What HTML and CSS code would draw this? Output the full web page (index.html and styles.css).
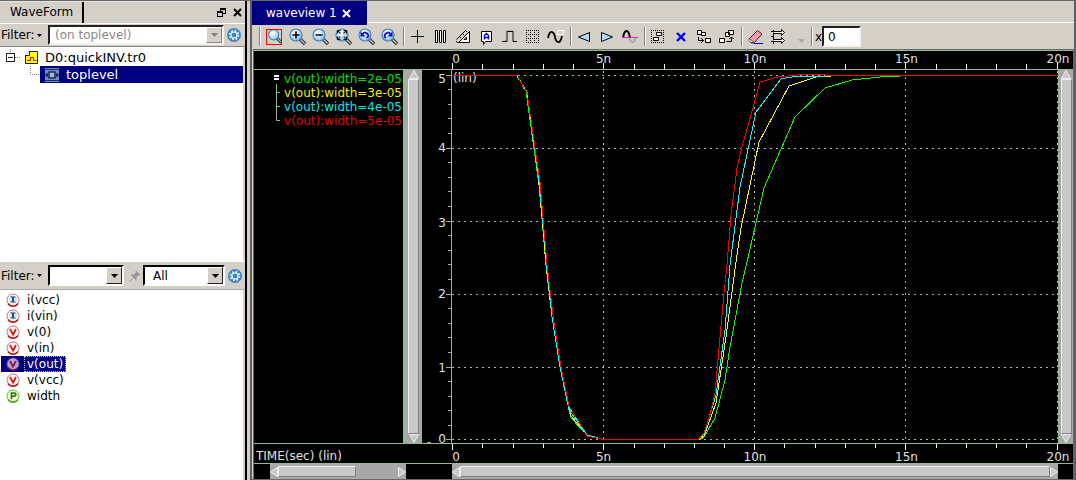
FILE: index.html
```html
<!DOCTYPE html>
<html lang="en">
<head>
<meta charset="utf-8">
<title>WaveView</title>
<link rel="stylesheet" href="styles.css">
</head>
<body>
<svg class="defs" aria-hidden="true">
  <defs>
    <radialGradient id="glass" cx="0.4" cy="0.35" r="0.7"><stop offset="0" stop-color="#ffffff"/><stop offset="0.5" stop-color="#c4e2fa"/><stop offset="1" stop-color="#7db8ea"/></radialGradient>
    <symbol id="lens" viewBox="0 0 20 20">
      <path d="M13 12l5 5" stroke="#222" stroke-width="3.4"/><path d="M13 12l4.6 4.6" stroke="#c8ccd2" stroke-width="1.4"/>
      <circle cx="9" cy="8" r="6" fill="url(#glass)" stroke="#4a82b8" stroke-width="1.2"/>
    </symbol>
    <symbol id="gear" viewBox="0 0 16 16">
      <circle cx="8" cy="8" r="7" fill="#3c85c6"/><circle cx="8" cy="8" r="4" fill="none" stroke="#d8e8f4" stroke-width="2.6" stroke-dasharray="1.57 1.57"/><circle cx="8" cy="8" r="3" fill="none" stroke="#d8e8f4" stroke-width="1.4"/><circle cx="8" cy="8" r="2.2" fill="#3c85c6"/>
    </symbol>
    <symbol id="current" viewBox="0 0 14 14"><circle cx="7" cy="7" r="6" fill="#fff" stroke="#d87070" stroke-width="1"/><path d="M2 10.500a6 6 0 0 0 10 0" fill="none" stroke="#c01818" stroke-width="1.500"/><circle cx="7" cy="6.500" r="4.200" fill="#d4e3ee"/><path d="M4.500 4h5M4.500 9h5" stroke="#1c5088" stroke-width="1.200"/><path d="M7 4v5" stroke="#1c5088" stroke-width="2"/></symbol>
    <symbol id="voltage" viewBox="0 0 14 14"><circle cx="7" cy="7" r="6" fill="#fff" stroke="#d87070" stroke-width="1"/><path d="M2 10.500a6 6 0 0 0 10 0" fill="none" stroke="#c01818" stroke-width="1.500"/><path d="M4 4l3 5.500 3-5.500" fill="none" stroke="#e81010" stroke-width="1.800"/></symbol>
    <symbol id="voltage-on" viewBox="0 0 14 14"><circle cx="7" cy="7" r="6" fill="#aaa8d8" stroke="#8050a0" stroke-width="1"/><path d="M2 10.500a6 6 0 0 0 10 0" fill="none" stroke="#701050" stroke-width="1.500"/><path d="M4 4l3 5.500 3-5.500" fill="none" stroke="#a01050" stroke-width="1.800"/></symbol>
    <symbol id="param" viewBox="0 0 14 14"><circle cx="7" cy="7" r="6" fill="#e8fcd8" stroke="#6cc02c" stroke-width="1"/><path d="M2 10.500a6 6 0 0 0 10 0" fill="none" stroke="#58ac18" stroke-width="1.500"/><path d="M5.500 10v-6h2.500q1.800 0 1.800 1.600t-1.800 1.600h-2.500" fill="none" stroke="#287010" stroke-width="1.600"/></symbol>
  </defs>
</svg>
<div class="app">
  <aside class="browser">
    <header class="dock-head">
      <h1 class="dock-title">WaveForm</h1>
      <div class="dock-tools">
        <button class="plain" aria-label="Float panel"><svg width="9" height="9"><path d="M3 0h6v6h-3v3h-6v-6h3z"/><path class="face" d="M4 2h4v3h-2v-2h-2zM1 5h4v3h-4z"/></svg></button>
        <button class="plain" aria-label="Close panel"><svg width="9" height="9" class="cross"><path d="M1 1l7 7M8 1l-7 7"/></svg></button>
      </div>
    </header>
    <div class="filter filter-top">
      <label for="f1">Filter:</label><button class="plain menu" aria-label="Filter options"><svg width="5" height="3"><path d="M0 0h5l-2.500 3z"/></svg></button>
      <div class="combo combo-wide off"><input id="f1" type="text" placeholder="(on toplevel)"><button class="drop" aria-label="Show filters"><svg width="7" height="4"><path d="M0 0h7l-3.500 4z"/></svg></button></div>
      <button class="plain gear" aria-label="Tree settings"><svg width="16" height="16"><use href="#gear"/></svg></button>
    </div>
    <ul class="tree">
      <li class="node">
        <svg class="branch" width="16" height="17" aria-hidden="true"><path class="dots" d="M5.500 0v4M10 8.500h6"/><rect x="1.500" y="4.500" width="8" height="8"/><path d="M3 8.500h5"/></svg>
        <svg width="15" height="15" aria-hidden="true"><path d="M5 1.500h8.500v12h-12v-8z" fill="#ffff10" stroke="#202000"/><path d="M5.500 1v4.500h-4.500" fill="#fff" stroke="#202000"/><path d="M3 10.500h3.500v-3h3v3h3" fill="none" stroke="#e00"/></svg>
        <span>D0:quickINV.tr0</span>
      </li>
      <li class="node child">
        <svg class="branch" width="10" height="17" aria-hidden="true"><path class="dots" d="M.5 0v8.500h9"/></svg>
        <span class="picked"><svg width="16" height="16" aria-hidden="true"><path fill="#7490bd" d="M1 1h14v14h-14z"/><path d="M1 2.500h14M1 13.500h14" stroke="#152c61" /><path d="M5 5h6v6h-6zM3 6v4M13 6v4M1 8h3M12 8h3" fill="#a9b5cf" stroke="#10285c" stroke-width="1.500"/></svg>toplevel</span>
      </li>
    </ul>
    <div class="filter filter-low">
      <label for="f2">Filter:</label><button class="plain menu" aria-label="Filter options"><svg width="5" height="3"><path d="M0 0h5l-2.500 3z"/></svg></button>
      <div class="combo combo-small"><input id="f2" type="text"><button class="drop" aria-label="Show filters"><svg width="7" height="4"><path d="M0 0h7l-3.500 4z"/></svg></button></div>
      <button class="plain pin" aria-label="Pin filter"><svg width="12" height="12"><path d="M7 1l4 4-2 0-2 2v3l-5-5h3l2-2zM4 8l-3 3" fill="#999" stroke="#999"/></svg></button>
      <div class="combo combo-kind"><select aria-label="Signal type"><option>All</option></select><span class="drop" aria-hidden="true"><svg width="7" height="4"><path d="M0 0h7l-3.500 4z"/></svg></span></div>
      <button class="plain gear" aria-label="Signal settings"><svg width="16" height="16"><use href="#gear"/></svg></button>
    </div>
    <ul class="signals" role="listbox" aria-label="Signals">
      <li role="option"><svg width="14" height="14"><use href="#current"/></svg><span>i(vcc)</span></li>
      <li role="option"><svg width="14" height="14"><use href="#current"/></svg><span>i(vin)</span></li>
      <li role="option"><svg width="14" height="14"><use href="#voltage"/></svg><span>v(0)</span></li>
      <li role="option"><svg width="14" height="14"><use href="#voltage"/></svg><span>v(in)</span></li>
      <li role="option" class="on" aria-selected="true"><svg width="14" height="14"><use href="#voltage-on"/></svg><span>v(out)</span></li>
      <li role="option"><svg width="14" height="14"><use href="#voltage"/></svg><span>v(vcc)</span></li>
      <li role="option"><svg width="14" height="14"><use href="#param"/></svg><span>width</span></li>
    </ul>
  </aside>

  <main class="viewer">
    <nav class="tabs">
      <div class="tab">waveview 1<button class="plain" aria-label="Close tab"><svg width="9" height="9" class="cross light"><path d="M1 1l7 7M8 1l-7 7"/></svg></button></div>
    </nav>
    <div class="toolbar" role="toolbar">
      <span class="sep"></span>
      <button class="tool" aria-label="Zoom area"><svg viewBox="0 0 20 20"><use href="#lens" x="2" y="1" width="17" height="17"/><rect x="2.500" y="2.500" width="15" height="15" fill="none" stroke="#f00"/></svg></button>
      <button class="tool" aria-label="Zoom in"><svg viewBox="0 0 20 20"><use href="#lens"/><path d="M5.500 8h7M9 4.500v7" stroke="#000" stroke-width="1.600"/></svg></button>
      <button class="tool" aria-label="Zoom out"><svg viewBox="0 0 20 20"><use href="#lens"/><path d="M5.500 8h7" stroke="#111" stroke-width="1.600"/></svg></button>
      <button class="tool" aria-label="Zoom fit"><svg viewBox="0 0 20 20"><use href="#lens"/><path d="M5 4l8 8M13 4l-8 8" stroke="#333" stroke-dasharray="3.500 4.400" stroke-width="1.200"/><path d="M4.500 6.500v-3h3M10.500 3.500h3v3M13.500 9.500v3h-3M7.500 12.500h-3v-3" fill="none" stroke="#111" stroke-width="1.200"/></svg></button>
      <button class="tool" aria-label="Undo zoom"><svg viewBox="0 0 20 20"><use href="#lens"/><path d="M6 8q2-4 5-1.500t-.5 4.500" fill="none" stroke="#11c" stroke-width="1.800"/><path d="M4.500 4.500v5h5z" fill="#11c"/></svg></button>
      <button class="tool" aria-label="Redo zoom"><svg viewBox="0 0 20 20"><use href="#lens"/><path d="M12 8q-2-4-5-1.500t0 4.500" fill="none" stroke="#11c" stroke-width="1.800"/><path d="M13.500 4.500v5h-5z" fill="#11c"/></svg></button>
      <span class="sep"></span>
      <button class="tool" aria-label="Cursor"><svg viewBox="0 0 20 20" class="ink"><path d="M3 9.500h13M9.500 3v13"/></svg></button>
      <button class="tool" aria-label="Vertical cursors"><svg viewBox="0 0 20 20" class="ink"><path d="M4.500 3.500h2v12h-2zM8.500 3.500h2v12h-2zM12.500 3.500h2v12h-2z" fill="#fff"/></svg></button>
      <button class="tool" aria-label="Measure"><svg viewBox="0 0 20 20" class="ink"><path d="M15.500 4.500v11h-11zM12.500 10v2.500h-2.500z" fill="#fff"/><path d="M2.500 12.500l9-9M2 14l2 2M5 9l2 2M8 6l2 2M11 3l2 2" /></svg></button>
      <button class="tool" aria-label="Label"><svg viewBox="0 0 20 20" class="ink"><path d="M4.500 4.500h10v10h-6l-2 3v-3h-2z" fill="#fff"/><path d="M7.500 12.500v-4l2-2 2 2v4M8 10.500h3" stroke="#00f" stroke-width="1.500"/></svg></button>
      <button class="tool" aria-label="Pulse"><svg viewBox="0 0 20 20" class="ink"><path d="M2 14.500h5v-10h6v10h4"/><path d="M4 13.500h2v-10h8v10" stroke="#8ab" stroke-width=".6"/></svg></button>
      <button class="tool" aria-label="Grid"><svg viewBox="0 0 20 20" class="ink"><path stroke-dasharray="1 1" d="M3 3.500h14M3 7.500h14M3 11.500h14M3 15.500h14"/><path stroke-dasharray="1 1" d="M3.500 3v14M7.500 3v14M11.500 3v14M15.500 3v14"/></svg></button>
      <button class="tool" aria-label="Signal"><svg viewBox="0 0 20 20" class="ink"><path d="M2 11q1.500-7 4-6t3 5 3 5 4-6" stroke-width="1.800"/><path d="M11.500 3.500h6v4h-6z" fill="#d4d0c8" stroke="#fff"/></svg></button>
      <span class="sep tight"></span>
      <button class="tool" aria-label="Previous edge"><svg viewBox="0 0 20 20" class="ink"><path d="M15.500 5.500v9l-11-4.500z" fill="#b8dafa"/></svg></button>
      <button class="tool" aria-label="Next edge"><svg viewBox="0 0 20 20" class="ink"><path d="M4.500 5.500v9l11-4.500z" fill="#b8dafa"/></svg></button>
      <button class="tool" aria-label="Threshold"><svg viewBox="0 0 20 20" class="ink"><path d="M9.500 11q1.500 5 3.500 4t3-5" stroke="#aaa" stroke-width="2"/><path d="M3 11q1-7 3.500-7t3.500 7" stroke-width="2"/><path d="M2 10.500h16" stroke="#e020d0"/></svg></button>
      <span class="sep tight"></span>
      <button class="tool" aria-label="Group"><svg viewBox="0 0 20 20" class="ink"><path stroke-dasharray="1 1" d="M3 3.500h13M3 15.500h13M3.500 3v13M15.500 3v13"/><path d="M8.500 5.500h5v3h-5zM5.500 10.500h5v3h-5z" fill="#fff"/></svg></button>
      <button class="tool" aria-label="Delete"><svg viewBox="0 0 20 20"><path d="M6 6l8 8M14 6l-8 8" stroke="#00f" stroke-width="2.400"/></svg></button>
      <button class="tool" aria-label="Push down"><svg viewBox="0 0 20 20" class="ink"><path d="M3.500 3.500h4v4h-4zM7.500 5.500h4v3h-4zM11.500 11.500h5v4h-5z" fill="#fff"/><path d="M4.500 10v3.500h5M7 11l2.500 2.500-2.500 2.500" /></svg></button>
      <button class="tool" aria-label="Pop up"><svg viewBox="0 0 20 20" class="ink"><path d="M11.500 3.500h5v4h-5zM8.500 5.500h4v4h-4zM2.500 11.500h5v4h-5z" fill="#fff"/><path d="M9.500 14.500h5v-4M12.500 12l2-2 2 2"/></svg></button>
      <span class="sep"></span>
      <button class="tool" aria-label="Erase"><svg viewBox="0 0 20 20"><path d="M3.500 11.500l8-8 4.500 3.500-8 9h-3z" fill="#f09aaa" stroke="#601828"/><path d="M3.500 11.500l4.500 4h-3l-2-2z" fill="#fff" stroke="#555"/><path d="M8 16.500h9" stroke="#00f"/></svg></button>
      <button class="tool" aria-label="Bus"><svg viewBox="0 0 20 20" class="ink"><path d="M4.500 3v14M2 4.500h3M2 9.500h3M2 14.500h3"/><path d="M4.500 4.500h8v-2l3 3-3 3v-2h-8M4.500 12.500h8v-2l3 3-3 3v-2h-8" fill="#fff"/></svg></button>
      <button class="plain more" aria-label="More tools"><svg width="7" height="5"><path d="M0 0h7l-3.500 4z" fill="#aaa8a4"/></svg></button>
      <span class="sep"></span>
      <label class="xval">x<input type="text" value="0"></label>
    </div>

    <div class="wave">
      <div class="axis axis-top">
        <svg viewBox="0 0 606 6" preserveAspectRatio="none"><path d="M.5 0v6M30.500 1v5M61.500 1v5M91.500 1v5M121.500 1v5M151.500 0v6M182.500 1v5M212.500 1v5M242.500 1v5M272.500 1v5M302.500 0v6M332.500 1v5M363.500 1v5M393.500 1v5M423.500 1v5M453.500 0v6M484.500 1v5M514.500 1v5M544.500 1v5M574.500 1v5M605.500 0v6"/></svg>
        <span class="zero">0</span><span class="q1">5n</span><span class="q2">10n</span><span class="q3">15n</span><span class="q4">20n</span>
      </div>
      <div class="legend">
        <svg width="12" height="50" aria-hidden="true"><path d="M0 4h5v2h-5zM0 7h5v2h-5z" fill="#fff"/><path d="M2.500 13v36.500h3.500M2 21.500h4M2 35.500h4" fill="none" stroke="#8fbc8f"/></svg>
        <ul>
          <li class="c-green">v(out):width=2e-05</li>
          <li class="c-yellow">v(out):width=3e-05</li>
          <li class="c-cyan">v(out):width=4e-05</li>
          <li class="c-red">v(out):width=5e-05</li>
        </ul>
      </div>
      <div class="vbar vbar-left"><svg width="10" height="9"><path class="arrow" d="M5 .5l4.500 8h-9z"/></svg><i class="thumb"></i><svg width="10" height="9"><path class="arrow" d="M5 8.500l4.500-8h-9z"/></svg></div>
      <div class="yaxis">
        <svg viewBox="0 0 30 373" preserveAspectRatio="none"><path d="M29.500 0v373M24 5.500h6M24 78.500h6M24 151.500h6M24 224.500h6M24 297.500h6M24 369.500h6M26 19.500h4M26 34.500h4M26 48.500h4M26 63.500h4M26 92.500h4M26 107.500h4M26 121.500h4M26 136.500h4M26 165.500h4M26 180.500h4M26 194.500h4M26 209.500h4M26 238.500h4M26 253.500h4M26 267.500h4M26 282.500h4M26 311.500h4M26 326.500h4M26 340.500h4M26 355.500h4M5 372.500h4"/></svg>
        <span class="v5">5</span><span class="v4">4</span><span class="v3">3</span><span class="v2">2</span><span class="v1">1</span><span class="v0">0</span>
      </div>
      <div class="plot">
        <span class="scale">(lin)</span>
        <svg viewBox="452 70 606 373" preserveAspectRatio="none" role="img" aria-label="Output voltage against time for four widths">
          <path class="grid" d="M452 75.500h606M452 148.500h606M452 221.500h606M452 294.500h606M452 367.500h606M452 439.500h606M603.500 71v372M754.500 71v372M905.500 71v372M1057.500 71v372"/>
          <g class="trace">
            <polyline class="t-green" points="517,75.500 526,91 539,185 546,265 552,317 560,367 571,418 587,435 603,439.500 700,439.500 704,437 715,418 725,380 730,347 742,283 747,262 764,188 795,117 825,88 852,80 880,77 900,76"/>
            <polyline class="t-yellow" points="517,75.500 527,92 539,183 546,265 552,317 560,367 571,416 587,435 603,439.500 699,439.500 704,436 716,403 726,337 736,262 741,228 759,142 789,86 816,77 831,76"/>
            <polyline class="t-cyan" points="517,75.500 527,92 539,182 547,265 552,317 560,367 569,410 587,435 603,439.500 698,439.500 704,434 716,395 725,330 730,265 740,187 756,112 781,79 797,76 825,76"/>
            <polyline class="t-red" points="452,75.500 517,75.500 527,93 540,182 547,265 553,315 561,367 569,406 587,436 603,439.500 698,439.500 704,433 710,415 715,393 724,293 727,265 731,215 737,168 742,147 751,115 760,82 778,77 803,74.500 825,74.500 825,75.500 1058,75.500"/>
            <polyline class="mix mix-green" points="517,76 527,94 539,185 546,265"/>
            <polyline class="mix mix-yellow" points="517,76 527,94 539,185 546,265"/>
            <polyline class="mix mix-cyan" points="546,265 552,317 560,367 568,406 587,435 600,438"/>
          </g>
        </svg>
      </div>
      <div class="vbar vbar-right"><svg width="10" height="9"><path class="arrow" d="M5 .5l4.500 8h-9z"/></svg><i class="thumb"></i><svg width="10" height="9"><path class="arrow" d="M5 8.500l4.500-8h-9z"/></svg></div>
      <div class="xname">TIME(sec) (lin)</div>
      <div class="axis axis-low">
        <svg viewBox="0 0 606 6" preserveAspectRatio="none"><path d="M.5 0v6M30.500 0v4M61.500 0v4M91.500 0v4M121.500 0v4M151.500 0v6M182.500 0v4M212.500 0v4M242.500 0v4M272.500 0v4M302.500 0v6M332.500 0v4M363.500 0v4M393.500 0v4M423.500 0v4M453.500 0v6M484.500 0v4M514.500 0v4M544.500 0v4M574.500 0v4M605.500 0v6"/></svg>
        <span class="zero">0</span><span class="q1">5n</span><span class="q2">10n</span><span class="q3">15n</span><span class="q4">20n</span>
      </div>
      <div class="hbar hbar-left"><svg width="8" height="10"><path class="arrow" d="M.5 5l7-4.500v9z"/></svg><i class="thumb"></i><i class="space"></i><svg width="8" height="10"><path class="arrow" d="M7.500 5l-7-4.500v9z"/></svg></div>
      <div class="hbar hbar-right"><svg width="8" height="10"><path class="arrow" d="M.5 5l7-4.500v9z"/></svg><i class="thumb"></i><svg width="8" height="10"><path class="arrow" d="M7.500 5l-7-4.500v9z"/></svg></div>
    </div>
  </main>
</div>
</body>
</html>
```
FILE: styles.css
```css
* { box-sizing: border-box; }
html, body { height: 100%; }
body { margin: 0; background: #d4d0c8; color: #000; font: 12px/16px "DejaVu Sans", sans-serif; overflow: hidden; }
ul { list-style: none; margin: 0; padding: 0; }
svg { display: block; flex: none; }
input, select, button { font: inherit; color: inherit; }
.defs { position: absolute; width: 0; height: 0; }
.plain { border: 0; background: none; padding: 0; }
.cross path { stroke: #000; stroke-width: 2; fill: none; }
.cross.light path { stroke: #fff; }

.app { display: flex; gap: 3px; height: 100vh; border-top: 1px solid #666; }

/* Signal browser */
.browser { width: 247px; flex: none; display: flex; flex-direction: column; border-right: 2px solid #000; }
.dock-head { height: 22px; flex: none; display: flex; justify-content: space-between; border-top: 1px solid #e8e6e0; }
.dock-title { margin: 0; width: 84px; padding: 2px 0 0 10px; font-size: 12px; font-weight: normal; border-right: 2px solid #000; }
.dock-tools { display: flex; align-items: center; gap: 7px; padding-right: 3px; }
.face { fill: #d4d0c8; }
.filter { display: flex; flex: none; align-items: center; padding-left: 1px; border-bottom: 1px solid #888; }
.filter-top { height: 24px; border-top: 1px solid #fff; }
.filter-low { height: 29px; border-top: 1px solid #fff; border-bottom-color: #aaa; }
.menu { width: 7px; margin-right: 4px; }
.filter label { width: 36px; }
.combo { display: flex; height: 20px; background: #fff; border: 2px solid; border-color: #222 #f4f2ee #f4f2ee #222; }
.filter-low .combo { height: 21px; border-color: #000 #fff #fff #000; }
.combo input, .combo select { flex: 1; min-width: 0; border: 0; padding: 0 5px; background: #fff; outline: 0; appearance: none; }
.combo select { padding-left: 8px; }
.combo input::placeholder { color: #888; opacity: 1; }
.combo-wide { width: 176px; }
.combo-small { width: 76px; }
.combo-kind { width: 82px; }
.drop { display: grid; place-items: center; width: 16px; padding: 0; background: #d4d0c8; border: 1px solid; border-color: #fff #222 #222 #fff; }
.off .drop path { fill: #808080; }
.off .drop { border-color: #fff #888 #888 #fff; }
.pin { width: 19px; padding-left: 5px; }
.gear { margin-left: 2px; }
.tree { height: 214px; flex: none; margin-right: 2px; padding-top: 2px; background: #fff; }
.node { display: flex; align-items: center; height: 17px; padding-left: 5px; font-size: 13px; }
.node .branch { margin-right: 3px; }
.node span { padding-left: 6px; }
.node.child { padding-left: 30px; }
.child .branch { margin: 0; }
.node .picked { display: flex; align-items: center; flex: 1; height: 17px; gap: 6px; padding-left: 4px; background: #000080; color: #fff; }
.branch path, .branch rect { fill: none; stroke: #222; }
.branch .dots { stroke: #777; stroke-dasharray: 1 1; }
.signals { flex: 1; margin-right: 2px; padding: 2px 0 0 1px; background: #fff; }
.signals li { display: flex; align-items: center; height: 16px; width: max-content; padding-left: 5px; gap: 4px; }
.signals span { padding: 0 2px; border: 1px solid transparent; line-height: 14px; }
.signals .on { background: #000080; color: #fff; }
.signals .on span { border: 1px dotted #c8c880; }

/* Viewer */
.viewer { flex: 1; min-width: 0; display: flex; flex-direction: column; border: solid #606060; border-width: 0 2px 1px 2px; }
.tabs { height: 22px; flex: none; display: flex; border-bottom: 1px solid #fff; }
.tab { position: relative; display: flex; align-items: center; gap: 5px; height: 24px; padding: 0 16px 0 14px; background: #000080; color: #fff; }
.toolbar { height: 27px; flex: none; display: flex; align-items: center; padding-left: 5px; }
.tool { width: 23px; height: 27px; padding: 1px 0 0 1px; border: 0; background: none; }
.tool svg { width: 20px; height: 20px; }
.sep { width: 2px; height: 19px; margin: 0 2px; background: #808080; border-right: 1px solid #fff; }
.sep.tight { margin: 0 1px 0 2px; }
.ink { fill: none; stroke: #000; }
.more { width: 18px; padding: 10px 0 0 7px; }
.xval { display: flex; align-items: center; height: 23px; }
.xval input { width: 39px; height: 21px; padding: 0 4px; border: 2px solid; border-color: #222 #f4f2ee #f4f2ee #222; background: #fff; outline: 0; }

.wave { flex: 1; min-height: 0; margin: 0 1px 0 2px; display: grid; grid-template: 19px minmax(0, 1fr) 20px 15px / 149px 19px 30px minmax(0, 1fr) 15px; background: #000; color: #e0e0e0; border-top: 1px solid #8fbc8f; outline: 1px solid #686864; }
.axis, .xname { border-bottom: 1px solid #8fbc8f; }
.axis { position: relative; }
.axis svg { position: absolute; left: 0; width: 100%; height: 6px; }
.axis path { stroke: #fff; stroke-width: 1; vector-effect: non-scaling-stroke; shape-rendering: crispEdges; }
.axis span { position: absolute; transform: translateX(-50%); }
.axis-top { grid-column: 1 / -1; }
.axis-top svg { left: 198px; bottom: 0; width: calc(100% - 213px); }
.axis-top span { top: 0; }
.axis-top .q1 { left: calc(198px + (100% - 213px) * 0.25); }
.axis-top .q2 { left: calc(198px + (100% - 213px) * 0.5); }
.axis-top .q3 { left: calc(198px + (100% - 213px) * 0.75); }
.axis-top .q4 { left: calc(100% - 15px); }
.axis-top .zero { left: 202px; }
.axis-low { grid-column: 4 / -1; }
.axis-low svg { top: 0; width: calc(100% - 15px); }
.axis-low span { top: 5px; }
.axis-low .q1 { left: calc((100% - 15px) * 0.25); }
.axis-low .q2 { left: calc((100% - 15px) * 0.5); }
.axis-low .q3 { left: calc((100% - 15px) * 0.75); }
.axis-low .q4 { left: calc(100% - 15px); }
.axis-low .zero { left: 4px; }
.xname { grid-column: 1 / 4; padding: 5px 0 0 2px; line-height: 14px; }

.legend, .plot, .yaxis, .vbar { border-bottom: 1px solid #8fbc8f; }
.legend { display: flex; justify-content: flex-end; line-height: 14px; white-space: nowrap; padding: 1px 1px 0 0; overflow: hidden; }
.legend svg { margin-right: -2px; }
.legend ul { padding-top: 1px; }
.c-green { color: #00e000; }
.c-yellow { color: #f0f000; }
.c-cyan { color: #00e8e8; }
.c-red { color: #e80000; }

.vbar { display: flex; flex-direction: column; align-items: center; background: #a8a8a8; }
.vbar .thumb { flex: 1; width: 11px; }
.vbar-left { border-left: 3px solid #8fbc8f; border-right: 1px solid #8fbc8f; }
.vbar-right { border-left: 1px solid #8fbc8f; }
.thumb { background: #c8c8c8; border: 1px solid; border-color: #eee #808080 #808080 #eee; }
.arrow { fill: #c8c8c8; stroke: #eee; }
.hbar { display: flex; align-items: center; background: #a8a8a8; }
.hbar .thumb { height: 11px; flex: 1; }
.hbar-left { grid-column: 1 / 3; margin: 0 16px; }
.hbar-left .thumb { flex: 77; }
.hbar-left .space { flex: 42; }
.hbar-right { grid-column: 4; }

.yaxis { position: relative; }
.yaxis svg { width: 100%; height: 100%; }
.yaxis path { stroke: #8fbc8f; vector-effect: non-scaling-stroke; shape-rendering: crispEdges; }
.yaxis span { position: absolute; right: 6px; transform: translateY(-50%); }
.v5 { top: 9px; }
.v4 { top: 21%; }
.v3 { top: 41%; }
.v2 { top: 60%; }
.v1 { top: 80%; }
.v0 { top: 99%; }
.plot { position: relative; overflow: hidden; }
.plot svg { position: relative; width: 100%; height: 100%; }
.scale { position: absolute; left: 1px; top: 0; }
.grid { stroke: #b0b0b0; stroke-dasharray: 2 4; fill: none; shape-rendering: crispEdges; vector-effect: non-scaling-stroke; }
.trace polyline { fill: none; stroke-width: 1; shape-rendering: crispEdges; vector-effect: non-scaling-stroke; }
.t-green { stroke: #0f0; }
.t-yellow { stroke: #ff0; }
.t-cyan { stroke: #0ff; }
.t-red { stroke: #f00; }
.mix-green { stroke: #0f0; stroke-dasharray: 4 7; }
.mix-yellow { stroke: #ff0; stroke-dasharray: 2 20; }
.mix-cyan { stroke: #0ff; stroke-dasharray: 6 6; }
```
